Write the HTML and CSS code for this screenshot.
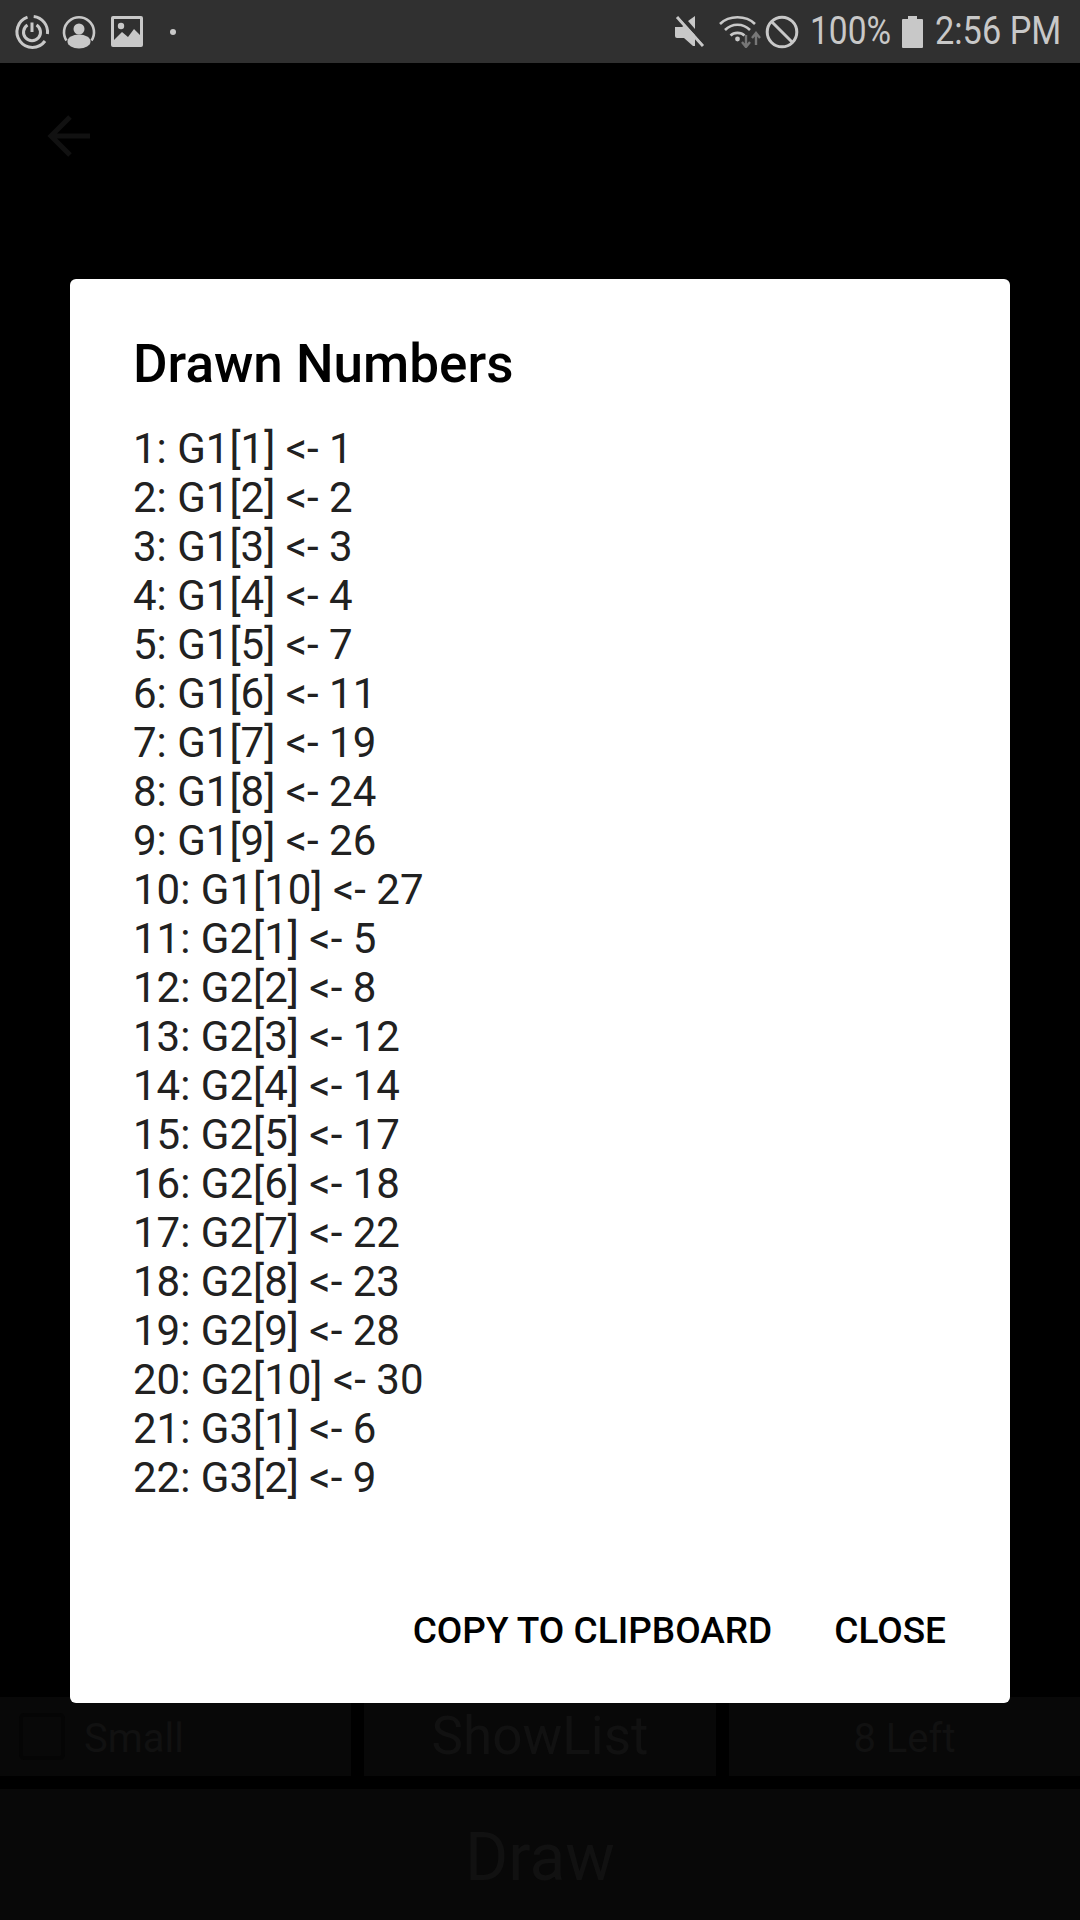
FILE: index.html
```html
<!DOCTYPE html>
<html lang="en">
<head>
    <meta charset="UTF-8">
    <meta name="viewport" content="width=device-width, initial-scale=1.0">
    <title>Drawn Numbers</title>
    <link rel="stylesheet" href="styles.css">
</head>
<body>

    <!-- status bar -->
    <div class="status-bar">
        <div class="status-left">
            <svg class="icon" width="38" height="38" viewBox="0 0 38 38" fill="none" stroke="#c8c8c8" stroke-width="3">
                <path d="M20.700 3.600A15.500 15.500 0 0 1 34.400 21"/>
                <path d="M32 28A15.500 15.500 0 1 1 14.500 4.200"/>
                <path d="M23.500 12A8.500 8.500 0 1 1 14.500 12"/>
                <path d="M19 9.500V19" stroke-width="3"/>
            </svg>
            <svg class="icon" width="34" height="34" viewBox="0 0 34 34">
                <path d="M4.500 25.500A15 15 0 1 1 29.500 25.500" fill="none" stroke="#c8c8c8" stroke-width="2.600"/>
                <circle cx="17" cy="14" r="5.500" fill="#c8c8c8"/>
                <ellipse cx="17" cy="26.500" rx="11.500" ry="7" fill="#c8c8c8"/>
            </svg>
            <svg class="icon image" width="32" height="31" viewBox="0 0 32 31">
                <path d="M2 0h28a2 2 0 0 1 2 2v27a2 2 0 0 1-2 2H2a2 2 0 0 1-2-2V2a2 2 0 0 1 2-2zM3 3v21l8-8 6 5 6-8 6 6V3z" fill="#c8c8c8" fill-rule="evenodd"/>
                <circle cx="10" cy="10" r="3.200" fill="#c8c8c8"/>
            </svg>
            <span class="status-dot"></span>
        </div>
        <div class="status-right">
            <svg class="icon" width="30" height="31" viewBox="0 0 30 31">
                <path d="M0 11h7l3-2 10 10v11h-2l-9-8H2a2 2 0 0 1-2-2zM13 5l7-5v13z" fill="#c8c8c8"/>
                <path d="M2 1l26 29" stroke="#c8c8c8" stroke-width="3"/>
                <path d="M5 0l26 29" stroke="#303030" stroke-width="2"/>
            </svg>
            <svg class="icon wifi" width="44" height="33" viewBox="0 0 44 33" fill="none" stroke="#c8c8c8" stroke-width="2.600">
                <path d="M1 9C10 0 27 0 36 9"/>
                <path d="M6 15C13 8 24 8 31 15"/>
                <path d="M11.500 20.500C15 17 22 17 25.500 20.500"/>
                <circle cx="18.500" cy="24" r="2.400" fill="#c8c8c8" stroke="none"/>
                <path d="M27 20v11M23 27l4 5 4-5M37 30V18M33 23l4-5 4 5" stroke="#777" stroke-width="2.400"/>
            </svg>
            <svg class="icon block" width="34" height="34" viewBox="0 0 34 34" fill="none" stroke="#c8c8c8" stroke-width="3">
                <circle cx="17" cy="17" r="14.800"/>
                <path d="M7 7l20 20"/>
            </svg>
            <span class="status-text percent">100%</span>
            <svg class="icon battery" width="21" height="33" viewBox="0 0 21 33">
                <path d="M1 4h5V1h9v3h5a1 1 0 0 1 1 1v27a1 1 0 0 1-1 1H1a1 1 0 0 1-1-1V5a1 1 0 0 1 1-1z" fill="#c8c8c8"/>
            </svg>
            <span class="status-text clock">2:56 PM</span>
        </div>
    </div>

    <!-- screen behind the dialog -->
    <div class="app-bar">
        <svg width="46" height="46" viewBox="0 0 46 46" fill="none" stroke="#111" stroke-width="5">
            <path d="M44 23H6M24 4L5 23l19 19"/>
        </svg>
    </div>

    <div class="content"></div>

    <div class="controls">
        <div class="cell cell-check">
            <span class="checkbox"></span>
            <span class="small-label">Small</span>
        </div>
        <div class="cell"><span class="show-label">ShowList</span></div>
        <div class="cell"><span class="left-label">8 Left</span></div>
    </div>
    <div class="draw-button">Draw</div>

    <!-- dialog -->
    <div class="dialog">
        <h2 class="dialog-title">Drawn Numbers</h2>
        <div class="dialog-body">
            <div>1: G1[1] &lt;- 1</div>
            <div>2: G1[2] &lt;- 2</div>
            <div>3: G1[3] &lt;- 3</div>
            <div>4: G1[4] &lt;- 4</div>
            <div>5: G1[5] &lt;- 7</div>
            <div>6: G1[6] &lt;- 11</div>
            <div>7: G1[7] &lt;- 19</div>
            <div>8: G1[8] &lt;- 24</div>
            <div>9: G1[9] &lt;- 26</div>
            <div>10: G1[10] &lt;- 27</div>
            <div>11: G2[1] &lt;- 5</div>
            <div>12: G2[2] &lt;- 8</div>
            <div>13: G2[3] &lt;- 12</div>
            <div>14: G2[4] &lt;- 14</div>
            <div>15: G2[5] &lt;- 17</div>
            <div>16: G2[6] &lt;- 18</div>
            <div>17: G2[7] &lt;- 22</div>
            <div>18: G2[8] &lt;- 23</div>
            <div>19: G2[9] &lt;- 28</div>
            <div>20: G2[10] &lt;- 30</div>
            <div>21: G3[1] &lt;- 6</div>
            <div>22: G3[2] &lt;- 9</div>
        </div>
        <div class="dialog-actions">
            <span class="action">COPY TO CLIPBOARD</span>
            <span class="action">CLOSE</span>
        </div>
    </div>

</body>
</html>
```

FILE: styles.css
```css
body {
    margin: 0;
    width: 1080px;
    height: 1920px;
    background-color: #000;
    font-family: Roboto, "Liberation Sans", sans-serif;
    display: flex;
    flex-direction: column;
    overflow: hidden;
    position: relative;
}

.status-bar {
    height: 63px;
    background-color: #303030;
    display: flex;
    justify-content: space-between;
    align-items: center;
    padding: 0 21px 0 13px;
    flex-shrink: 0;
}

.status-left,
.status-right {
    display: flex;
    align-items: center;
}

.icon {
    display: block;
}

.status-left {
    gap: 11px;
}

.image {
    margin-left: 4px;
}

.status-dot {
    width: 6px;
    height: 6px;
    margin-left: 16px;
    border-radius: 50%;
    background-color: #c8c8c8;
}

.wifi {
    margin-left: 14px;
}

.block {
    margin-left: 2px;
}

.battery {
    margin-left: 13px;
}

.status-text {
    color: #c8c8c8;
    font-size: 39px;
    line-height: 63px;
    white-space: nowrap;
    transform-origin: left center;
}

.percent {
    width: 79px;
    margin-left: 11px;
    transform: scaleX(0.86);
}

.clock {
    width: 124px;
    margin-left: 12px;
    transform: scaleX(0.88);
}

.app-bar {
    height: 146px;
    padding: 0 0 0 46px;
    display: flex;
    align-items: center;
    flex-shrink: 0;
}

.content {
    flex: 1;
}

.controls {
    display: grid;
    grid-template-columns: 351px 352px 351px;
    gap: 13px;
    height: 79px;
    margin-bottom: 13px;
}

.cell {
    background-color: #080808;
    color: #111;
    display: flex;
    align-items: center;
    justify-content: center;
}

.cell-check {
    justify-content: flex-start;
    padding-left: 19px;
}

.checkbox {
    width: 38px;
    height: 39px;
    border: 4px solid #050505;
    border-radius: 5px;
}

.small-label {
    margin-left: 19px;
    font-size: 40px;
    line-height: 50px;
    padding-top: 4px;
}

.show-label {
    font-size: 53px;
    line-height: 60px;
    margin-bottom: 2px;
}

.left-label {
    font-size: 40px;
    line-height: 50px;
    padding-top: 4px;
}

.draw-button {
    height: 131px;
    padding-top: 5px;
    box-sizing: border-box;
    background-color: #080808;
    color: #111;
    font-size: 66px;
    display: flex;
    align-items: center;
    justify-content: center;
    flex-shrink: 0;
}

.dialog {
    position: absolute;
    left: 70px;
    top: 279px;
    width: 940px;
    height: 1424px;
    box-sizing: border-box;
    padding: 51px 64px 0 63px;
    background-color: #fff;
    border-radius: 6px;
    display: flex;
    flex-direction: column;
}

.dialog-title {
    margin: 0;
    font-size: 53px;
    font-weight: 500;
    line-height: 68px;
    color: #000;
}

.dialog-body {
    margin-top: 26px;
    font-size: 42px;
    line-height: 49px;
    color: #212121;
    flex: 1;
}

.dialog-actions {
    display: flex;
    justify-content: flex-end;
    gap: 62px;
    padding-bottom: 48px;
}

.action {
    font-size: 37px;
    font-weight: 500;
    line-height: 48px;
    color: #000;
}
```
